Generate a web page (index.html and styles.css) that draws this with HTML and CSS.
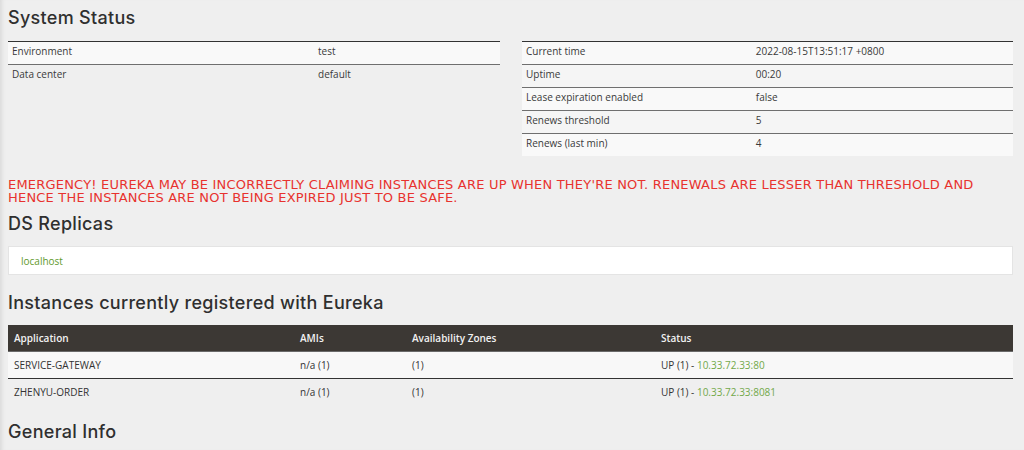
FILE: index.html
```html
<!DOCTYPE html>
<html>
<head>
<meta charset="utf-8">
<link rel="stylesheet" href="styles.css">
</head>
<body>
<div class="page">
  <h2 class="heading heading-first">System Status</h2>
  <div class="status-grid">
    <table class="info-table left-table">
      <tbody>
        <tr><td class="k">Environment</td><td>test</td></tr>
        <tr><td class="k">Data center</td><td>default</td></tr>
      </tbody>
    </table>
    <table class="info-table right-table">
      <tbody>
        <tr><td class="k">Current time</td><td>2022-08-15T13:51:17 +0800</td></tr>
        <tr><td class="k">Uptime</td><td>00:20</td></tr>
        <tr><td class="k">Lease expiration enabled</td><td>false</td></tr>
        <tr><td class="k">Renews threshold</td><td>5</td></tr>
        <tr><td class="k">Renews (last min)</td><td>4</td></tr>
      </tbody>
    </table>
  </div>

  <h4 class="emergency">EMERGENCY! EUREKA MAY BE INCORRECTLY CLAIMING INSTANCES ARE UP WHEN THEY'RE NOT. RENEWALS ARE LESSER THAN THRESHOLD AND HENCE THE INSTANCES ARE NOT BEING EXPIRED JUST TO BE SAFE.</h4>

  <h2 class="heading heading-ds">DS Replicas</h2>
  <ul class="replicas">
    <li><a class="green" href="#">localhost</a></li>
  </ul>

  <h2 class="heading heading-inst">Instances currently registered with Eureka</h2>
  <table class="instances">
    <colgroup>
      <col class="c1"><col class="c2"><col class="c3"><col class="c4">
    </colgroup>
    <thead>
      <tr><th>Application</th><th>AMIs</th><th>Availability Zones</th><th>Status</th></tr>
    </thead>
    <tbody>
      <tr><td>SERVICE-GATEWAY</td><td>n/a (1)</td><td>(1)</td><td>UP (1) - <a class="ip" href="#">10.33.72.33:80</a></td></tr>
      <tr><td>ZHENYU-ORDER</td><td>n/a (1)</td><td>(1)</td><td>UP (1) - <a class="ip" href="#">10.33.72.33:8081</a></td></tr>
    </tbody>
  </table>

  <h2 class="heading heading-gen">General Info</h2>
</div>
</body>
</html>
```

FILE: styles.css
```css
html, body {
  margin: 0;
  padding: 0;
}
body {
  background: #efefef;
  color: #3a3a3a;
  font-family: "Open Sans", "Noto Sans", sans-serif;
  font-size: 10px;
  box-shadow: inset 5px 0 5px -4px rgba(0,0,0,0.12);
  min-height: 450px;
  overflow: hidden;
}
.page {
  padding: 0 11px 0 8px;
}
.heading {
  font-family: "Inter", "Noto Sans", sans-serif;
  font-weight: 500;
  font-size: 18px;
  line-height: 22px;
  color: #2f2f2f;
  margin: 0;
  letter-spacing: 0.3px;
}
.heading-first {
  padding-top: 7px;
  margin-bottom: 12px;
}
.status-grid {
  display: grid;
  grid-template-columns: 492px 491px;
  column-gap: 22px;
  align-items: start;
}
.info-table {
  border-collapse: collapse;
  width: 100%;
  border-top: 1px solid #333;
}
.info-table td {
  padding: 0 4px 4px;
  height: 18px;
  line-height: 18px;
  vertical-align: middle;
  border-top: 1px solid #6f6f6f;
  white-space: nowrap;
}
.info-table tr:first-child td {
  border-top: none;
}
.info-table tr:nth-child(odd) td {
  background: #f9f9f9;
}
.left-table td.k { width: 62.2%; }
.right-table td.k { width: 46.8%; }
.right-table tr td {
  background: #f5f5f5;
}
.right-table tr:nth-child(odd) td {
  background: #f9f9f9;
}

.emergency {
  margin: 22px 0 0 0;
  font-family: "DejaVu Sans", sans-serif;
  font-weight: normal;
  font-size: 13px;
  line-height: 13px;
  color: #e8322e;
  letter-spacing: 0.2px;
}
.heading-ds {
  margin-top: 9px;
}
.replicas {
  list-style: none;
  margin: 11px 0 0 0;
  padding: 0 12px;
  background: #fff;
  border: 1px solid #e4e4e4;
  height: 27px;
  display: flex;
  align-items: center;
}
.green {
  color: #5f9a2c;
  text-decoration: none;
}
.heading-inst {
  margin-top: 17px;
}
.instances {
  margin-top: 11px;
  width: 100%;
  border-collapse: collapse;
  table-layout: fixed;
}
.instances .c1 { width: 286px; }
.instances .c2 { width: 112px; }
.instances .c3 { width: 249px; }
.instances .c4 { width: 358px; }
.instances th {
  background: #3c3834;
  color: #f2f2f2;
  font-weight: 600;
  text-align: left;
  height: 26px;
  padding: 0 6px;
  border-bottom: 1px solid #6a6a6a;
}
.instances td {
  padding: 0 6px;
  height: 26px;
  vertical-align: middle;
  color: #333;
}
.instances tbody tr:first-child td {
  background: #f8f8f8;
  border-bottom: 1px solid #333;
}
.ip {
  color: #72a84a;
  text-decoration: none;
}
.heading-gen {
  margin-top: 16px;
}
```
